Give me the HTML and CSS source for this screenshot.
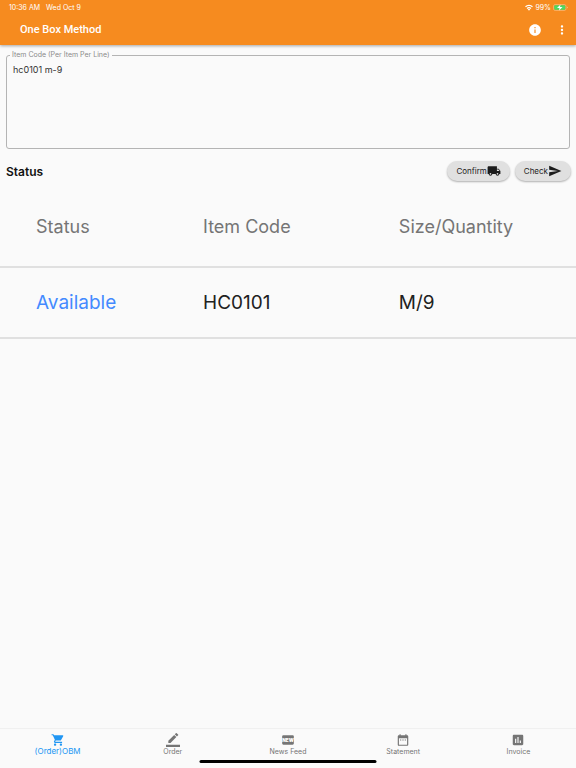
FILE: index.html
```html
<!DOCTYPE html>
<html lang="en">
<head>
  <meta charset="UTF-8" />
  <meta name="viewport" content="width=device-width, initial-scale=1.0"/>
  <title>One Box Method</title>
  <link rel="stylesheet" href="styles.css">
</head>
<body>
  <header class="header">
    <div class="status-bar">
      <span>10:36 AM</span>
      <span class="date">Wed Oct 9</span>
      <span class="battery">
        <svg width="8" height="7" viewBox="0 0 16 13" fill="none" stroke="#fff" stroke-width="2.4"><path d="M1 5a10 10 0 0 1 14 0M4 8.500a6 6 0 0 1 8 0"/><path d="M8 13l-2.500-2.800a4 4 0 0 1 5 0z" fill="#fff" stroke="none"/></svg>
        99%
        <svg width="15" height="7" viewBox="0 0 30 14"><rect x="1" y="1" width="25" height="12" rx="3.500" fill="none" stroke="#fff" stroke-opacity=".6"/><rect x="2.500" y="2.500" width="22" height="9" rx="2" fill="#4cd964"/><path d="M15 1L8 8h5l-1 5 7-7h-5z" fill="#fff"/><path d="M28 5v4q2-2 0-4z" fill="#fff"/></svg>
      </span>
    </div>
    <div class="app-bar">
      <h1>One Box Method</h1>
      <button class="icon-button" aria-label="Info">
        <svg width="14" height="14" viewBox="0 0 24 24" fill="#fff"><path d="M12 2C6.480 2 2 6.480 2 12s4.480 10 10 10 10-4.480 10-10S17.520 2 12 2zm1 15h-2v-6h2v6zm0-8h-2V7h2v2z"/></svg>
      </button>
      <button class="icon-button" aria-label="More">
        <svg width="14" height="14" viewBox="0 0 24 24" fill="#fff"><path d="M12 8c1.100 0 2-.9 2-2s-.9-2-2-2-2 .9-2 2 .9 2 2 2zm0 2c-1.100 0-2 .9-2 2s.9 2 2 2 2-.9 2-2-.9-2-2-2zm0 6c-1.100 0-2 .9-2 2s.9 2 2 2 2-.9 2-2-.9-2-2-2z"/></svg>
      </button>
    </div>
  </header>

  <main class="content">
    <fieldset class="code-field">
      <legend><label for="itemCode">Item Code (Per Item Per Line)</label></legend>
      <textarea id="itemCode" spellcheck="false">hc0101 m-9</textarea>
    </fieldset>

    <div class="actions">
      <h2>Status</h2>
      <button class="chip">Confirm<svg width="14" height="14" viewBox="0 0 24 24"><path d="M20 8h-3V4H3c-1.100 0-2 .9-2 2v11h2c0 1.660 1.340 3 3 3s3-1.340 3-3h6c0 1.660 1.340 3 3 3s3-1.340 3-3h2v-5l-3-4zM6 18.500c-.83 0-1.500-.67-1.500-1.500s.67-1.500 1.500-1.500 1.500.67 1.500 1.500-.67 1.500-1.500 1.500zm13.500-9l1.960 2.500H17V9.500h2.500zm-1.500 9c-.83 0-1.500-.67-1.500-1.500s.67-1.500 1.500-1.500 1.500.67 1.500 1.500-.67 1.500-1.500 1.500z"/></svg></button>
      <button class="chip">Check<svg width="14" height="14" viewBox="0 0 24 24"><path d="M2.010 21L23 12 2.010 3 2 10l15 2-15 2z"/></svg></button>
    </div>

    <table class="results">
      <thead>
        <tr><th>Status</th><th>Item Code</th><th>Size/Quantity</th></tr>
      </thead>
      <tbody>
        <tr><td class="available">Available</td><td>HC0101</td><td>M/9</td></tr>
      </tbody>
    </table>
  </main>

  <nav class="bottom-nav">
    <a href="#" class="active">
      <svg width="14" height="14" viewBox="0 0 24 24"><path d="M7 18c-1.100 0-1.990.9-1.990 2S5.900 22 7 22s2-.9 2-2-.9-2-2-2zM1 2v2h2l3.600 7.590-1.350 2.450c-.16.28-.25.61-.25.960 0 1.100.9 2 2 2h12v-2H7.420c-.14 0-.25-.11-.25-.25l.03-.12.9-1.630h7.450c.75 0 1.410-.41 1.750-1.030l3.580-6.490A1 1 0 0 0 20 4H5.210l-.94-2H1zm16 16c-1.100 0-1.990.9-1.990 2s.89 2 1.990 2 2-.9 2-2-.9-2-2-2z"/></svg>
      <span>(Order)OBM</span>
    </a>
    <a href="#">
      <svg width="14" height="14" viewBox="0 0 24 24"><path d="M17.750 7L14 3.250l-10 10V17h3.750l10-10zm2.960-2.960a1 1 0 0 0 0-1.410L18.370.29a1 1 0 0 0-1.410 0L15 2.250 18.750 6l1.960-1.960zM0 20h24v4H0z"/></svg>
      <span>Order</span>
    </a>
    <a href="#">
      <svg width="14" height="14" viewBox="0 0 24 24"><path d="M20 4H4a2 2 0 0 0-2 2v12a2 2 0 0 0 2 2h16a2 2 0 0 0 2-2V6a2 2 0 0 0-2-2z"/><text class="badge-text" x="12" y="15" text-anchor="middle">NEW</text></svg>
      <span>News Feed</span>
    </a>
    <a href="#">
      <svg width="14" height="14" viewBox="0 0 24 24"><path d="M9 11H7v2h2v-2zm4 0h-2v2h2v-2zm4 0h-2v2h2v-2zm2-7h-1V2h-2v2H8V2H6v2H5c-1.110 0-1.990.9-1.990 2L3 20a2 2 0 0 0 2 2h14c1.100 0 2-.9 2-2V6c0-1.100-.9-2-2-2zm0 16H5V9h14v11z"/></svg>
      <span>Statement</span>
    </a>
    <a href="#">
      <svg width="14" height="14" viewBox="0 0 24 24"><path d="M19 3H5c-1.100 0-2 .9-2 2v14c0 1.100.9 2 2 2h14c1.100 0 2-.9 2-2V5c0-1.100-.9-2-2-2zM9 17H7v-7h2v7zm4 0h-2V7h2v10zm4 0h-2v-4h2v4z"/></svg>
      <span>Invoice</span>
    </a>
    <div class="home-indicator"></div>
  </nav>
</body>
</html>
```
FILE: styles.css
```css
* {
  box-sizing: border-box;
}

body {
  font-family: Inter, 'Liberation Sans', sans-serif;
  background: #fafafa;
  color: #212121;
  margin: 0;
  min-height: 100vh;
  display: flex;
  flex-direction: column;
}

svg {
  display: block;
  flex: none;
}

button {
  font-family: inherit;
  border: none;
  cursor: pointer;
}

.header {
  background: #f68b1f;
  color: #fff;
  box-shadow: 0 1px 3px rgba(0, 0, 0, 0.35);
}

.status-bar {
  display: flex;
  align-items: center;
  height: 14px;
  padding: 0 8px 0 9px;
  font-size: 7px;
}

.date {
  margin-left: 6px;
}

.battery {
  display: flex;
  align-items: center;
  gap: 2px;
  margin-left: auto;
}

.app-bar {
  display: flex;
  align-items: center;
  gap: 13px;
  height: 31px;
  padding: 0 7px 0 20px;
}

.app-bar h1 {
  flex: 1;
  margin: 0;
  font-family: Roboto, 'Liberation Sans', sans-serif;
  font-size: 11px;
  font-weight: 500;
}

.icon-button {
  padding: 0;
  background: none;
}

.content {
  flex: 1;
  padding-top: 5px;
}

.code-field {
  height: 99px;
  margin: 0 6px;
  padding: 0;
  border: 1px solid #b4b4b4;
  border-radius: 3px;
}

.code-field legend {
  margin-left: 3px;
  padding: 0 2px;
  font-size: 7px;
  line-height: 10px;
  color: #8a8a8a;
}

.code-field textarea {
  display: block;
  width: 100%;
  height: 86px;
  padding: 3px 6px;
  border: none;
  outline: none;
  resize: none;
  background: none;
  color: #333;
  font-family: inherit;
  font-size: 9px;
  line-height: 14px;
}

.actions {
  display: flex;
  align-items: center;
  gap: 5px;
  height: 44px;
  padding: 0 5px 0 6px;
}

.actions h2 {
  flex: 1;
  margin: 0;
  font-size: 12px;
  font-weight: 600;
  color: #111;
}

.chip {
  display: flex;
  align-items: center;
  height: 20px;
  padding: 0 9px;
  border-radius: 10px;
  background: #e0e0e0;
  color: #222;
  fill: #1c1c1c;
  font-size: 8px;
  font-weight: 400;
  box-shadow: 0 1px 2px rgba(0, 0, 0, 0.3);
}

.results {
  width: 100%;
  table-layout: fixed;
  border-collapse: collapse;
  font-size: 19px;
  text-align: left;
}

.results th,
.results td {
  height: 71px;
  padding: 0 0 0 36px;
  border-bottom: 2px solid #e0e0e0;
  font-weight: 400;
}

.results th {
  height: 74px;
  padding-bottom: 6px;
  color: #757575;
  font-size: 18px;
}

.results th:first-child {
  width: 29%;
}

.results th:nth-child(2) {
  width: 34%;
}

.results .available {
  color: #448aff;
}

.bottom-nav {
  position: relative;
  display: flex;
  height: 40px;
  padding-top: 4px;
  border-top: 1px solid #f0f0f0;
}

.bottom-nav a {
  flex: 1;
  display: flex;
  flex-direction: column;
  align-items: center;
  color: #757575;
  fill: #757575;
  font-size: 7px;
  line-height: 9px;
  text-decoration: none;
}

.bottom-nav .active {
  color: #2196f3;
  fill: #2196f3;
  font-size: 8px;
}

.badge-text {
  fill: #fff;
  font-size: 8px;
  font-weight: 900;
}

.home-indicator {
  position: absolute;
  bottom: 5px;
  left: 50%;
  width: 177px;
  height: 3px;
  border-radius: 2px;
  background: #000;
  transform: translateX(-50%);
}
```
